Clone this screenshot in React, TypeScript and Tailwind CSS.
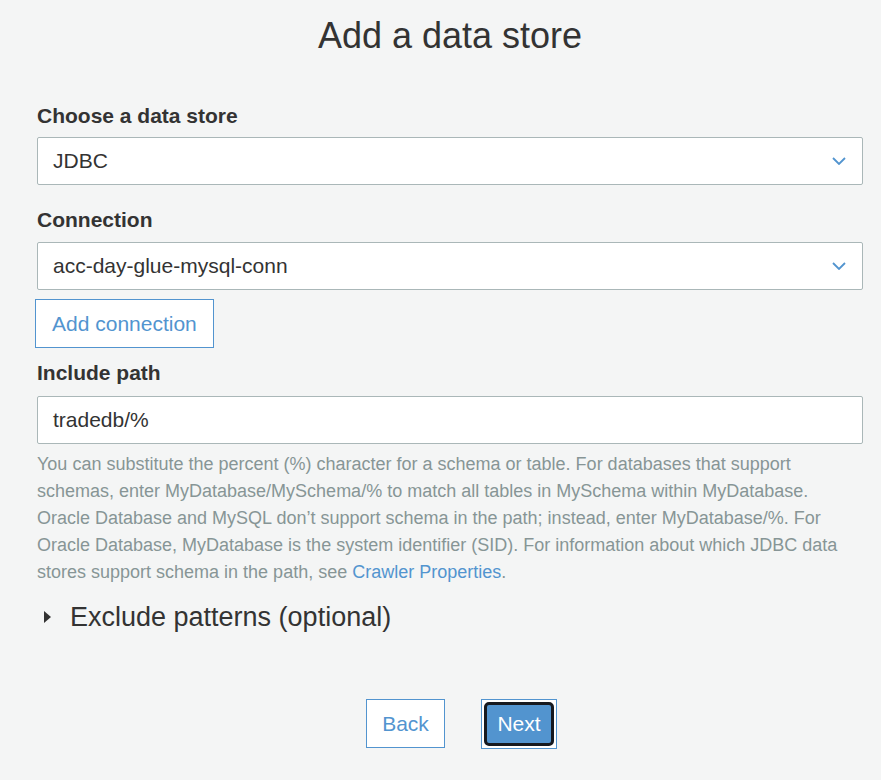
const BLUE = "#5294cf"

const Chevron = () => (
  <svg width="14" height="8" viewBox="0 0 14 8" fill="none" className="shrink-0">
    <path d="M1 1l6 6 6-6" stroke={BLUE} strokeWidth="1.8" />
  </svg>
)

const Label = ({ children, className = "" }: { children: string; className?: string }) => (
  <div className={"text-[21px] font-bold leading-[24px] text-[#333333] " + className}>{children}</div>
)

const Select = ({ value }: { value: string }) => (
  <div className="flex h-[48px] items-center justify-between rounded-[2px] border border-[#aab7b8] bg-white pl-[15px] pr-[16px]">
    <span className="text-[21px] leading-[24px] text-[#333333]">{value}</span>
    <Chevron />
  </div>
)

export default function App() {
  return (
    <div
      className="min-h-[780px] bg-[#f4f5f5] pl-[37px] pr-[18px] pt-[16px]"
      style={{ fontFamily: '"Liberation Sans", Arial, sans-serif' }}
    >
      <h1 className="text-center text-[36px] leading-[40px] font-normal text-[#333333]">Add a data store</h1>

      <Label className="mt-[48px] mb-[9px]">Choose a data store</Label>
      <Select value="JDBC" />

      <Label className="mt-[23px] mb-[10px]">Connection</Label>
      <Select value="acc-day-glue-mysql-conn" />

      <div className="mt-[9px] -ml-[2px] flex">
        <div className="flex h-[49px] cursor-pointer items-center border border-[#5294cf] bg-white px-[16px] text-[21px] leading-[24px] text-[#5294cf]">
          Add connection
        </div>
      </div>

      <Label className="mt-[13px] mb-[11px]">Include path</Label>
      <div className="flex h-[48px] items-center rounded-[2px] border border-[#aab7b8] bg-white pl-[15px]">
        <span className="text-[21px] leading-[24px] text-[#333333]">tradedb/%</span>
      </div>

      <p className="mt-[7px] text-[18px] leading-[27px] text-[#879596]">
        You can substitute the percent (%) character for a schema or table. For databases that support schemas,
        enter MyDatabase/MySchema/% to match all tables in MySchema within MyDatabase. Oracle Database and MySQL
        don’t support schema in the path; instead, enter MyDatabase/%. For Oracle Database, MyDatabase is the
        system identifier (SID). For information about which JDBC data stores support schema in the path, see{" "}
        <a className="text-[#5294cf]">Crawler Properties</a>.
      </p>

      <div className="mt-[15px] flex items-center">
        <svg width="7" height="12" viewBox="0 0 7 12" className="ml-[7px] mr-[19px]">
          <path d="M0 0l7 6-7 6z" fill="#333333" />
        </svg>
        <span className="text-[27px] leading-[32px] text-[#333333]">Exclude patterns (optional)</span>
      </div>

      <div className="mt-[66px] flex justify-center pl-[23px]">
        <button className="h-[49px] w-[79px] border border-[#5294cf] bg-white text-[21px] text-[#5294cf]">Back</button>
        <span className="ml-[36px] border border-[#5294cf] bg-white p-[2px]">
          <button className="h-[44px] w-[70px] rounded-[5px] border-[3px] border-[#16191f] bg-[#5294cf] text-[21px] text-white">
            Next
          </button>
        </span>
      </div>
    </div>
  )
}
